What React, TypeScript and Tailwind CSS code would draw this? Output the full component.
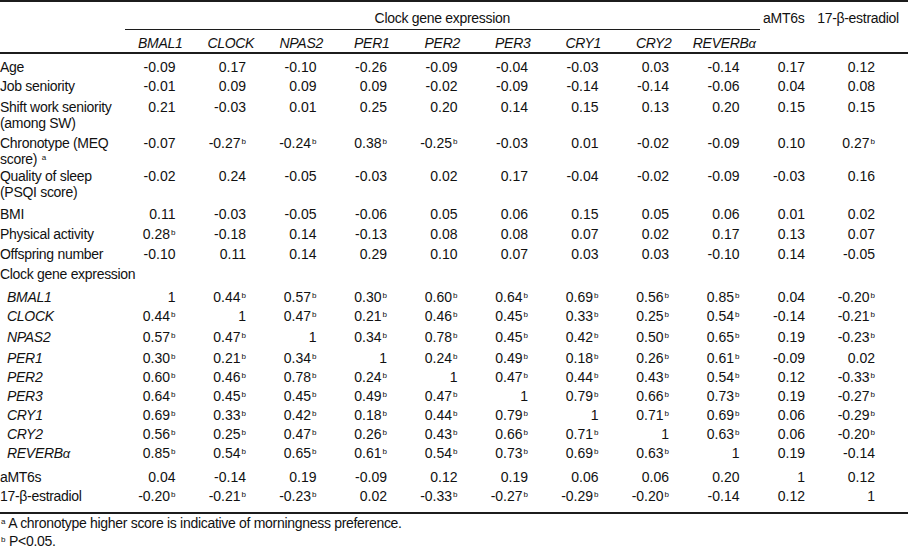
import React from "react";

type Row = { label: React.ReactNode; h: string; indent?: boolean; v?: string[] };

const GRID = "grid grid-cols-[125px_repeat(9,70.5px)_48.5px_1fr]";

const genes = ["BMAL1", "CLOCK", "NPAS2", "PER1", "PER2", "PER3", "CRY1", "CRY2"];

const Sup = ({ c }: { c: string }) => <sup className="text-[8px] ml-[1px] tracking-normal">{c}</sup>;

const Reverb = () => (
  <span>
    REVERB<span className="text-[13px]">α</span>
  </span>
);

const rows: Row[] = [
  { label: "Age", h: "h-[19px]", v: ["-0.09", "0.17", "-0.10", "-0.26", "-0.09", "-0.04", "-0.03", "0.03", "-0.14", "0.17", "0.12"] },
  { label: "Job seniority", h: "h-[21px]", v: ["-0.01", "0.09", "0.09", "0.09", "-0.02", "-0.09", "-0.14", "-0.14", "-0.06", "0.04", "0.08"] },
  {
    label: (
      <>
        Shift work seniority
        <br />
        (among SW)
      </>
    ),
    h: "h-[36px]",
    v: ["0.21", "-0.03", "0.01", "0.25", "0.20", "0.14", "0.15", "0.13", "0.20", "0.15", "0.15"],
  },
  {
    label: (
      <>
        Chronotype (MEQ
        <br />
        score) <Sup c="a" />
      </>
    ),
    h: "h-[33px]",
    v: ["-0.07", "-0.27b", "-0.24b", "0.38b", "-0.25b", "-0.03", "0.01", "-0.02", "-0.09", "0.10", "0.27b"],
  },
  {
    label: (
      <>
        Quality of sleep
        <br />
        (PSQI score)
      </>
    ),
    h: "h-[38px]",
    v: ["-0.02", "0.24", "-0.05", "-0.03", "0.02", "0.17", "-0.04", "-0.02", "-0.09", "-0.03", "0.16"],
  },
  { label: "BMI", h: "h-[20px]", v: ["0.11", "-0.03", "-0.05", "-0.06", "0.05", "0.06", "0.15", "0.05", "0.06", "0.01", "0.02"] },
  { label: "Physical activity", h: "h-[20px]", v: ["0.28b", "-0.18", "0.14", "-0.13", "0.08", "0.08", "0.07", "0.02", "0.17", "0.13", "0.07"] },
  { label: "Offspring number", h: "h-[20px]", v: ["-0.10", "0.11", "0.14", "0.29", "0.10", "0.07", "0.03", "0.03", "-0.10", "0.14", "-0.05"] },
  { label: "Clock gene expression", h: "h-[23px]" },
  { label: "BMAL1", indent: true, h: "h-[19px]", v: ["1", "0.44b", "0.57b", "0.30b", "0.60b", "0.64b", "0.69b", "0.56b", "0.85b", "0.04", "-0.20b"] },
  { label: "CLOCK", indent: true, h: "h-[21px]", v: ["0.44b", "1", "0.47b", "0.21b", "0.46b", "0.45b", "0.33b", "0.25b", "0.54b", "-0.14", "-0.21b"] },
  { label: "NPAS2", indent: true, h: "h-[21px]", v: ["0.57b", "0.47b", "1", "0.34b", "0.78b", "0.45b", "0.42b", "0.50b", "0.65b", "0.19", "-0.23b"] },
  { label: "PER1", indent: true, h: "h-[19px]", v: ["0.30b", "0.21b", "0.34b", "1", "0.24b", "0.49b", "0.18b", "0.26b", "0.61b", "-0.09", "0.02"] },
  { label: "PER2", indent: true, h: "h-[19px]", v: ["0.60b", "0.46b", "0.78b", "0.24b", "1", "0.47b", "0.44b", "0.43b", "0.54b", "0.12", "-0.33b"] },
  { label: "PER3", indent: true, h: "h-[19px]", v: ["0.64b", "0.45b", "0.45b", "0.49b", "0.47b", "1", "0.79b", "0.66b", "0.73b", "0.19", "-0.27b"] },
  { label: "CRY1", indent: true, h: "h-[19px]", v: ["0.69b", "0.33b", "0.42b", "0.18b", "0.44b", "0.79b", "1", "0.71b", "0.69b", "0.06", "-0.29b"] },
  { label: "CRY2", indent: true, h: "h-[19px]", v: ["0.56b", "0.25b", "0.47b", "0.26b", "0.43b", "0.66b", "0.71b", "1", "0.63b", "0.06", "-0.20b"] },
  { label: <Reverb />, indent: true, h: "h-[24px]", v: ["0.85b", "0.54b", "0.65b", "0.61b", "0.54b", "0.73b", "0.69b", "0.63b", "1", "0.19", "-0.14"] },
  { label: "aMT6s", h: "h-[19px]", v: ["0.04", "-0.14", "0.19", "-0.09", "0.12", "0.19", "0.06", "0.06", "0.20", "1", "0.12"] },
  { label: "17-β-estradiol", h: "h-[24px]", v: ["-0.20b", "-0.21b", "-0.23b", "0.02", "-0.33b", "-0.27b", "-0.29b", "-0.20b", "-0.14", "0.12", "1"] },
];

function Val({ s }: { s: string }) {
  if (s.endsWith("b")) {
    return (
      <>
        {s.slice(0, -1)}
        <Sup c="b" />
      </>
    );
  }
  return <>{s}</>;
}

function padFor(i: number) {
  if (i < 9) return "pr-5";
  if (i === 9) return "pr-[3px]";
  return "pr-[33px]";
}

export default function App() {
  return (
    <div className="w-[908px] h-[549px] overflow-hidden bg-white text-[#111111] font-['Liberation_Sans',Arial,sans-serif] text-[14px] leading-4">
      <div className="border-t-2 border-b-2 border-[#1c1c1c] tracking-[-0.3px]">
        <div className={`${GRID} grid-rows-[28px_22px]`}>
          <div className="row-span-2" />
          <div className="col-span-9 border-b border-[#1c1c1c] pt-2 text-center">Clock gene expression</div>
          <div className="row-span-2 pt-2 text-center">aMT6s</div>
          <div className="row-span-2 pt-2 text-center">17-β-estradiol</div>
          {genes.map((g) => (
            <div key={g} className="pt-[5px] text-center italic">
              {g}
            </div>
          ))}
          <div className="pt-[5px] text-center italic">
            <Reverb />
          </div>
        </div>
      </div>
      <div className="pt-[5px] border-b-2 border-[#1c1c1c]">
        {rows.map((r, ri) => (
          <div key={ri} className={`${GRID} ${r.h} items-start`}>
            <div className={r.indent ? "pl-[7px] italic whitespace-nowrap tracking-[-0.3px]" : "whitespace-nowrap tracking-[-0.3px]"}>{r.label}</div>
            {r.v &&
              r.v.map((s, i) => (
                <div key={i} className={`text-right whitespace-nowrap ${padFor(i)}`}>
                  <Val s={s} />
                </div>
              ))}
          </div>
        ))}
      </div>
      <div className="leading-[18px] tracking-[-0.3px]">
        <div>
          <Sup c="a" /> A chronotype higher score is indicative of morningness preference.
        </div>
        <div>
          <Sup c="b" /> P&lt;0.05.
        </div>
      </div>
    </div>
  );
}
